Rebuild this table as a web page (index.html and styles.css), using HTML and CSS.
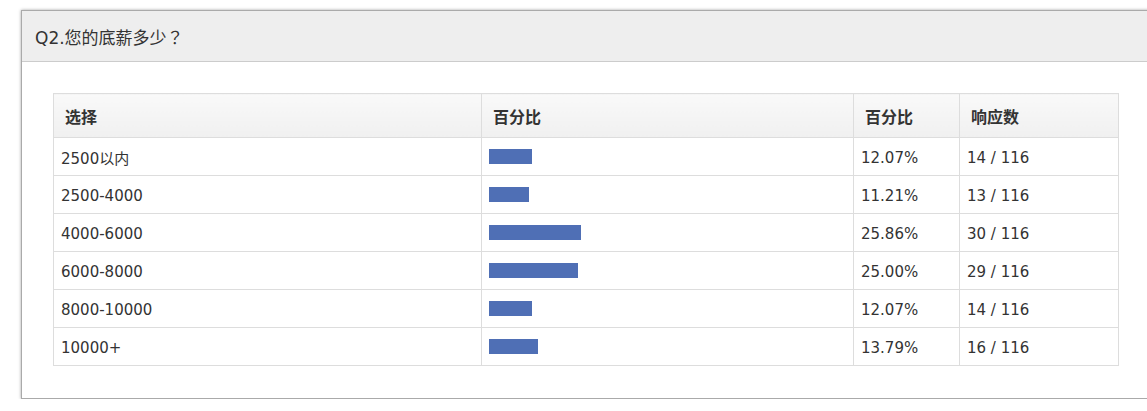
FILE: index.html
```html
<!DOCTYPE html>
<html lang="zh">
<head>
<meta charset="utf-8">
<link rel="stylesheet" href="styles.css">
</head>
<body>
<div class="panel">
  <div class="panel-head">Q2.您的底薪多少<span class="fw">？</span></div>
  <div class="panel-body">
    <table class="stats">
      <colgroup>
        <col class="c1"><col class="c2"><col class="c3"><col class="c4">
      </colgroup>
      <thead>
        <tr><th>选择</th><th>百分比</th><th>百分比</th><th>响应数</th></tr>
      </thead>
      <tbody>
        <tr><td>2500以内</td><td><div class="bar" style="width:12.07%"></div></td><td>12.07%</td><td>14 / 116</td></tr>
        <tr><td>2500-4000</td><td><div class="bar" style="width:11.21%"></div></td><td>11.21%</td><td>13 / 116</td></tr>
        <tr><td>4000-6000</td><td><div class="bar" style="width:25.86%"></div></td><td>25.86%</td><td>30 / 116</td></tr>
        <tr><td>6000-8000</td><td><div class="bar" style="width:25.00%"></div></td><td>25.00%</td><td>29 / 116</td></tr>
        <tr><td>8000-10000</td><td><div class="bar" style="width:12.07%"></div></td><td>12.07%</td><td>14 / 116</td></tr>
        <tr><td>10000+</td><td><div class="bar" style="width:13.79%"></div></td><td>13.79%</td><td>16 / 116</td></tr>
      </tbody>
    </table>
  </div>
</div>
</body>
</html>
```
FILE: styles.css
```css
html { overflow: hidden; }
body {
  margin: 0;
  background: #fff;
  font-family: "DejaVu Sans", "Noto Sans CJK SC", sans-serif;
  color: #333;
}
.panel {
  margin: 10px 0 0 21px;
  width: 1129px;
  background: #fff;
  border-left: 1px solid #aaa;
  border-bottom: 1px solid #aaa;
  border-top: 1px solid #aaa;
  box-shadow: 0 0 3px rgba(0,0,0,0.35);
}
.panel-head {
  height: 51px;
  box-sizing: border-box;
  padding: 0 13px;
  display: flex;
  align-items: center;
  background: #eee;
  border-bottom: 1px solid #ccc;
  font-size: 17px;
  color: #333;
}
.fw {
  font-family: "Noto Sans CJK TC", sans-serif;
}
.panel-body {
  padding: 31px 32px 32px 31px;
}
.stats {
  width: 1065px;
  border-collapse: collapse;
  font-size: 15px;
  table-layout: fixed;
}
.c1 { width: 428px; }
.c2 { width: 372px; }
.c3 { width: 106px; }
.c4 { width: 159px; }
.stats th, .stats td {
  border: 1px solid #ddd;
  text-align: left;
}
.stats th {
  height: 44px;
  box-sizing: border-box;
  padding: 0 11px;
  font-size: 16px;
  font-family: "Noto Sans CJK SC", sans-serif;
  font-weight: bold;
  background: linear-gradient(#f9f9f9, #f0f0f0);
}
.stats td {
  height: 38px;
  box-sizing: border-box;
  padding: 2px 7px 0;
}
.bar {
  height: 15px;
  margin-top: -2px;
  background: #4f6fb5;
}
```
